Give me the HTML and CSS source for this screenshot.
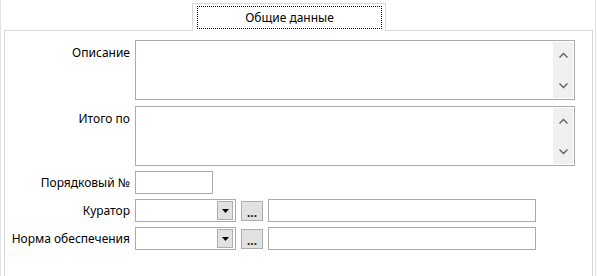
FILE: index.html
```html
<!DOCTYPE html>
<html lang="ru">
<head>
<meta charset="utf-8">
<title>Общие данные</title>
<link rel="stylesheet" href="styles.css">
</head>
<body>
<div class="frame">
  <div class="tabstrip">
    <div class="tab"><div class="tab-focus">Общие данные</div></div>
  </div>
  <div class="panel">
    <div class="form">
      <div class="label label-top">Описание</div>
      <div class="memo memo-first">
        <div class="memo-text"></div>
        <div class="vscroll">
          <svg width="9" height="6" viewBox="0 0 9 6"><polyline points="0.5,5.5 4.5,1.5 8.5,5.5" fill="none" stroke="#606060" stroke-width="1.4"/></svg>
          <svg width="9" height="6" viewBox="0 0 9 6"><polyline points="0.5,0.5 4.5,4.5 8.5,0.5" fill="none" stroke="#606060" stroke-width="1.4"/></svg>
        </div>
      </div>

      <div class="label label-top">Итого по</div>
      <div class="memo">
        <div class="memo-text"></div>
        <div class="vscroll">
          <svg width="9" height="6" viewBox="0 0 9 6"><polyline points="0.5,5.5 4.5,1.5 8.5,5.5" fill="none" stroke="#606060" stroke-width="1.4"/></svg>
          <svg width="9" height="6" viewBox="0 0 9 6"><polyline points="0.5,0.5 4.5,4.5 8.5,0.5" fill="none" stroke="#606060" stroke-width="1.4"/></svg>
        </div>
      </div>

      <div class="label">Порядковый №</div>
      <div class="line"><div class="edit edit-num"></div></div>

      <div class="label">Куратор</div>
      <div class="line">
        <div class="combo"><div class="combo-btn"><svg width="7" height="4" viewBox="0 0 7 4"><polygon points="0,0 7,0 3.5,4" fill="#000"/></svg></div></div>
        <div class="dots-btn">...</div>
        <div class="edit edit-wide"></div>
      </div>

      <div class="label">Норма обеспечения</div>
      <div class="line">
        <div class="combo"><div class="combo-btn"><svg width="7" height="4" viewBox="0 0 7 4"><polygon points="0,0 7,0 3.5,4" fill="#000"/></svg></div></div>
        <div class="dots-btn">...</div>
        <div class="edit edit-wide"></div>
      </div>
    </div>
  </div>
</div>
</body>
</html>
```

FILE: styles.css
```css
* {
  box-sizing: border-box;
}

html, body {
  margin: 0;
  padding: 0;
  background: #ffffff;
  overflow: hidden;
}

body {
  font-family: "Noto Sans", "Liberation Sans", sans-serif;
  font-size: 12px;
  color: #000000;
}

.frame {
  width: 596px;
  height: 276px;
  border-left: 1px solid #e3e3e3;
  border-right: 1px solid #e3e3e3;
  padding: 0 2px 0 3px;
  display: flex;
  flex-direction: column;
  overflow: hidden;
}

.tabstrip {
  height: 31px;
  display: flex;
  align-items: flex-end;
  margin-bottom: -1px;
  position: relative;
  z-index: 1;
}

.tab {
  margin-left: 188px;
  width: 194px;
  height: 28px;
  border: 1px solid #d9d9d9;
  border-bottom: none;
  background: #ffffff;
  padding: 2px 3px 2px 4px;
}

.tab-focus {
  height: 23px;
  border: 1px dotted #000000;
  display: flex;
  align-items: center;
  justify-content: center;
  line-height: 15px;
}

.panel {
  flex: 1;
  border: 1px solid #d9d9d9;
  border-bottom: none;
  padding-top: 9px;
}

.form {
  display: grid;
  grid-template-columns: 125px 1fr;
  column-gap: 5px;
  row-gap: 5px;
  align-items: center;
}

.label {
  text-align: right;
  white-space: nowrap;
  line-height: 15px;
}

.label-top {
  align-self: start;
  padding-top: 5px;
}

.memo {
  width: 440px;
  height: 60px;
  border: 1px solid #ababab;
  background: #ffffff;
  display: flex;
  padding: 1px;
}

.memo-first {
  margin-bottom: 1px;
}

.memo-text {
  flex: 1;
}

.vscroll {
  width: 20px;
  background: #f0f0f0;
  display: flex;
  flex-direction: column;
  align-items: center;
  justify-content: space-between;
  padding: 10px 0 9px 1px;
}

.vscroll svg {
  display: block;
}

.line {
  display: flex;
  align-items: center;
  height: 23px;
}

.edit {
  height: 23px;
  border: 1px solid #ababab;
  background: #ffffff;
}

.edit-num {
  width: 78px;
}

.edit-wide {
  width: 268px;
  margin-left: 5px;
}

.combo {
  width: 101px;
  height: 23px;
  border: 1px solid #ababab;
  background: #ffffff;
  display: flex;
  justify-content: flex-end;
  align-items: center;
  padding-right: 2px;
}

.combo-btn {
  width: 16px;
  height: 19px;
  background: #e1e1e1;
  border: 1px solid #adadad;
  display: flex;
  align-items: center;
  justify-content: center;
}

.combo-btn svg {
  display: block;
}

.dots-btn {
  width: 22px;
  height: 20px;
  margin-left: 5px;
  background: #e1e1e1;
  border: 1px solid #adadad;
  display: flex;
  align-items: flex-start;
  justify-content: center;
  color: #2a1f0c;
  font-weight: bold;
  line-height: 14px;
  padding-top: 4px;
}
```
